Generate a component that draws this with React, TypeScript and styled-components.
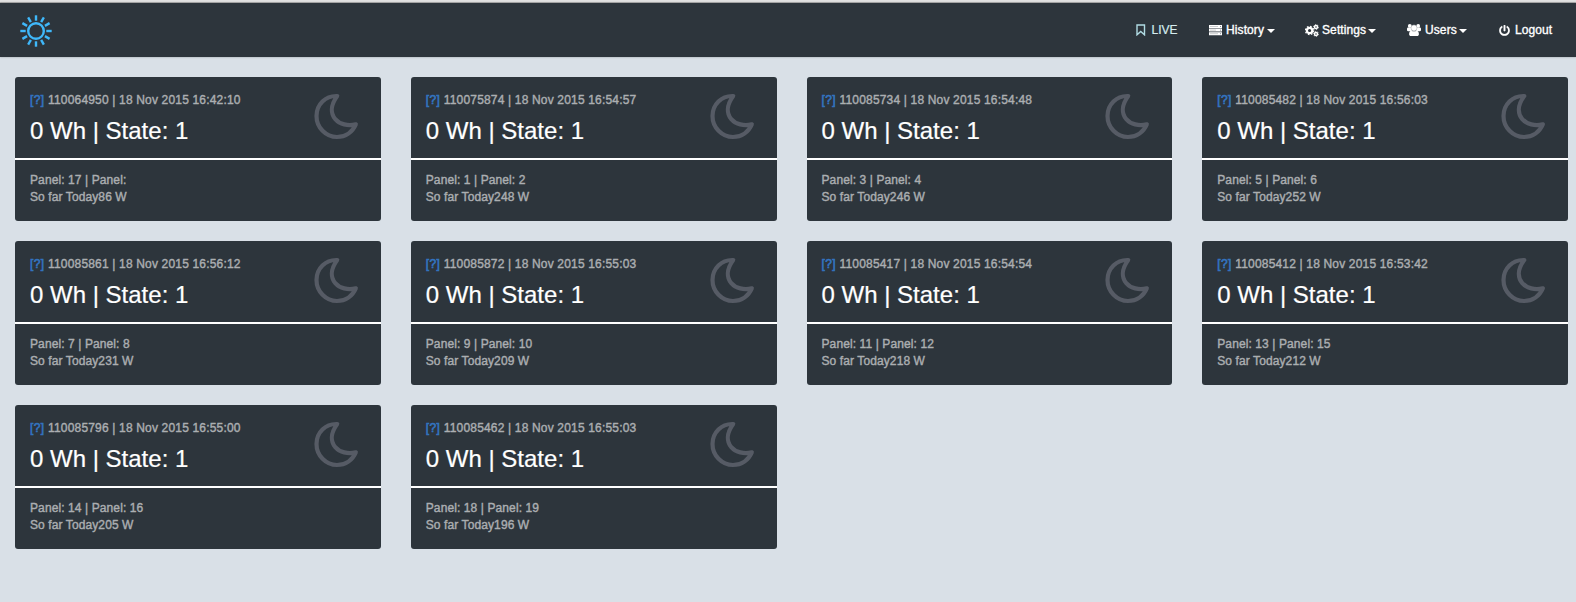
import React from 'react';
import styled, { createGlobalStyle } from 'styled-components';
import { FaPowerOff } from 'react-icons/fa';

const GlobalStyle = createGlobalStyle`
  * { box-sizing: border-box; }
  body {
    margin: 0;
    background: #d9e0e7;
    font-family: "Liberation Sans", Arial, sans-serif;
    font-size: 12px;
    color: #abaeb1;
  }
`;

const Page = styled.div`
  min-height: 602px;
  overflow: hidden;
`;

const TopEdge = styled.div`
  height: 3px;
  background: #e1e1e1;
  border-bottom: 1px solid #b4b4b4;
`;

const Navbar = styled.header`
  height: 54px;
  background: #2d353c;
  box-shadow: 0 0 2px rgba(0, 0, 0, 0.3);
  display: flex;
  align-items: center;
  justify-content: space-between;
  padding: 0 20px;
`;

const Logo = styled.svg`
  width: 32px;
  height: 32px;
  margin-top: 2px;
`;

const Menu = styled.nav`
  display: flex;
`;

const MenuItem = styled.a<{ $width: number; $light?: boolean }>`
  display: flex;
  align-items: center;
  width: ${(p) => p.$width}px;
  color: ${(p) => (p.$light ? '#d5ecef' : '#fff')};
  -webkit-text-stroke: ${(p) => (p.$light ? '0.2px' : '0.35px')};
  white-space: nowrap;
  svg { flex: none; display: block; }
`;

const IconBox = styled.span<{ $width: number }>`
  width: ${(p) => p.$width}px;
  flex: none;
`;

const Label = styled.span<{ $width: number }>`
  width: ${(p) => p.$width}px;
  letter-spacing: 0.1px;
`;

const Caret = styled.span`
  border: 4px solid transparent;
  border-top-color: #fff;
  border-bottom: 0;
  margin-top: 2px;
`;

const Grid = styled.main`
  display: grid;
  grid-template-columns: repeat(4, 365.75px);
  gap: 20px 30px;
  padding: 20px 0 0 15px;
`;

const Card = styled.article`
  height: 144px;
  background: #2d353c;
  border-radius: 3px;
`;

const CardHead = styled.div`
  height: 83px;
  border-bottom: 2px solid #fff;
  padding: 15px 21px 0 15px;
  display: flex;
  justify-content: space-between;
`;

const Heading = styled.div`
  white-space: nowrap;
`;

const Stamp = styled.div`
  line-height: 17px;
  letter-spacing: 0.17px;
  -webkit-text-stroke: 0.4px;
`;

const HelpLink = styled.a`
  color: #3374c0;
  letter-spacing: 0.4px;
  -webkit-text-stroke: 0.6px;
`;

const Reading = styled.div`
  margin-top: 8px;
  font-size: 24px;
  line-height: 27px;
  color: #fff;
  -webkit-text-stroke: 0.2px;
`;

const Moon = styled.svg`
  width: 46px;
  height: 48px;
`;

const CardBody = styled.div`
  padding: 12px 15px;
  line-height: 17px;
  letter-spacing: 0.1px;
  -webkit-text-stroke: 0.4px;
`;

const units = [
  { id: '110064950', time: '16:42:10', a: '17', b: '', w: 86 },
  { id: '110075874', time: '16:54:57', a: '1', b: '2', w: 248 },
  { id: '110085734', time: '16:54:48', a: '3', b: '4', w: 246 },
  { id: '110085482', time: '16:56:03', a: '5', b: '6', w: 252 },
  { id: '110085861', time: '16:56:12', a: '7', b: '8', w: 231 },
  { id: '110085872', time: '16:55:03', a: '9', b: '10', w: 209 },
  { id: '110085417', time: '16:54:54', a: '11', b: '12', w: 218 },
  { id: '110085412', time: '16:53:42', a: '13', b: '15', w: 212 },
  { id: '110085796', time: '16:55:00', a: '14', b: '16', w: 205 },
  { id: '110085462', time: '16:55:03', a: '18', b: '19', w: 196 },
];

const SunLogo = () => (
  <Logo viewBox="0 0 32 32" fill="none" stroke="#3fb8fa" strokeWidth="2.4">
    <circle cx="16" cy="16" r="7.8" />
    {Array.from({ length: 12 }, (_, i) => (
      <path key={i} d="M16 .3v5.400" transform={`rotate(${i * 30} 16 16)`} />
    ))}
  </Logo>
);

const Bookmark = () => (
  <svg width="10" height="12" viewBox="0 0 10 12" fill="none" stroke="#b0dbe3" strokeWidth="1.4">
    <path d="M1 1h7.500v9.800L4.750 7.400 1 10.800z" />
  </svg>
);

const Server = () => (
  <svg width="13" height="12" viewBox="0 0 13 12">
    <path fill="#fff" d="M0 1h13v3H0zM0 4.600h13v3H0zM0 8.200h13v3H0z" />
    <path stroke="#b5b8ba" strokeWidth=".7" d="M1 2.500h8M1 6.100h6M1 9.700h8" />
    <path stroke="#7c8186" d="M11 2.500h.9M11 6.100h.9M11 9.700h.9" />
  </svg>
);

const Cogs = () => (
  <svg width="14" height="13" viewBox="0 0 14 13" fill="none" stroke="#fff">
    <circle cx="4.600" cy="6.500" r="2.700" strokeWidth="2.200" />
    <circle cx="4.600" cy="6.500" r="4.100" strokeWidth="1.300" strokeDasharray="1.610 1.610" />
    <circle cx="11" cy="3.100" r="1.500" strokeWidth="1.500" />
    <circle cx="11" cy="3.100" r="2.500" strokeWidth=".8" strokeDasharray="1.300 1.300" />
    <circle cx="11" cy="9.900" r="1.500" strokeWidth="1.500" />
    <circle cx="11" cy="9.900" r="2.500" strokeWidth=".8" strokeDasharray="1.300 1.300" />
  </svg>
);

const Users = () => (
  <svg width="14" height="12" viewBox="0 0 14 12" fill="#fff">
    <circle cx="2.800" cy="1.900" r="1.900" />
    <circle cx="11.200" cy="1.900" r="1.900" />
    <path d="M0 6V4.700C0 3.900.7 3.400 1.300 3.400h3.500v3.800H1C.4 7.200 0 6.700 0 6zM14 6V4.700c0-.8-.7-1.300-1.300-1.300H9.200v3.800H13c.6 0 1-.5 1-1.200z" />
    <circle cx="7" cy="3.900" r="3" stroke="#aaaeb1" strokeWidth=".5" />
    <path d="M4.400 6.400c1.500 1.200 3.700 1.200 5.200 0 1.500.2 2.300 1.700 2.300 3.800 0 1.200-.8 1.800-1.800 1.800H3.900c-1 0-1.800-.6-1.800-1.800 0-2.100.8-3.600 2.300-3.800z" />
  </svg>
);

const MoonIcon = () => (
  <Moon viewBox="0 0 46 48" fill="none" stroke="#565b65" strokeWidth="4.200" strokeLinejoin="round">
    <path d="M23.200 4C11.500 3.500 2.500 12.500 2.500 24s9.300 21 20.500 21c8.700 0 15.500-5 18.800-12.700C26 36.500 9 23.500 23.200 4z" />
  </Moon>
);

export default function App() {
  return (
    <Page>
      <GlobalStyle />
      <TopEdge />
      <Navbar>
        <SunLogo />
        <Menu>
          <MenuItem $width={73} $light><IconBox $width={15.5}><Bookmark /></IconBox>LIVE</MenuItem>
          <MenuItem $width={96}><IconBox $width={17}><Server /></IconBox><Label $width={40.5}>History</Label><Caret /></MenuItem>
          <MenuItem $width={102}><IconBox $width={17}><Cogs /></IconBox><Label $width={46}>Settings</Label><Caret /></MenuItem>
          <MenuItem $width={92}><IconBox $width={18}><Users /></IconBox><Label $width={34}>Users</Label><Caret /></MenuItem>
          <MenuItem $width={57}>
            <IconBox $width={16}><FaPowerOff size={11} stroke="#fff" strokeWidth={8} /></IconBox>
            <Label $width={40}>Logout</Label>
          </MenuItem>
        </Menu>
      </Navbar>
      <Grid>
        {units.map((u) => (
          <Card key={u.id}>
            <CardHead>
              <Heading>
                <Stamp><HelpLink>[?]</HelpLink> {u.id} | 18 Nov 2015 {u.time}</Stamp>
                <Reading>0 Wh | State: 1</Reading>
              </Heading>
              <MoonIcon />
            </CardHead>
            <CardBody>
              <div>Panel: {u.a} | Panel: {u.b}</div>
              <div>So far Today{u.w} W</div>
            </CardBody>
          </Card>
        ))}
      </Grid>
    </Page>
  );
}
